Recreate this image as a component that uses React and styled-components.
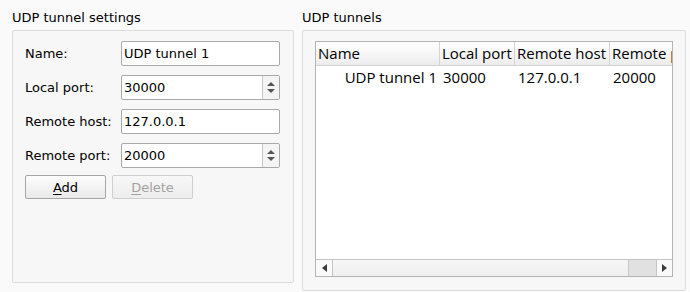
import React from 'react'
import { styled, createGlobalStyle } from 'styled-components'

const GlobalStyle = createGlobalStyle`
    body {
        margin: 0;
        background: #fafafa;
        font-family: "DejaVu Sans", sans-serif;
        font-size: 13px;
        color: #000;
    }
`

const Window = styled.div`
    width: 690px;
    height: 292px;
    box-sizing: border-box;
    display: flex;
    gap: 8px;
    padding-left: 12px;
`

const Column = styled.section`
    display: flex;
    flex-direction: column;
    width: ${props => props.$width}px;
`

const Title = styled.div`
    height: 30px;
    box-sizing: border-box;
    padding-top: 10px;
    line-height: 16px;
    white-space: nowrap;
`

const GroupBox = styled.div`
    height: ${props => props.$height}px;
    box-sizing: border-box;
    border: 1px solid #dcdcdc;
    border-radius: 2px;
    background: #f7f7f7;
    display: flex;
    flex-direction: column;
    padding: ${props => props.$padding};
`

const Form = styled.div`
    display: grid;
    grid-template-columns: 96px 159px;
    grid-auto-rows: 25px;
    row-gap: 9px;
    align-items: center;
`

const Label = styled.label`
    white-space: nowrap;
`

const Field = styled.div`
    height: 25px;
    box-sizing: border-box;
    border: 1px solid #a9a9a9;
    border-radius: 2px;
    background: #fff;
    display: flex;
    align-items: center;
    overflow: hidden;
`

const FieldText = styled.span`
    flex: 1;
    padding-left: 2px;
    white-space: nowrap;
`

const Spin = styled.div`
    width: 16px;
    align-self: stretch;
    border-left: 1px solid #c8c8c8;
    background: #f4f4f4;
    display: flex;
    flex-direction: column;
    align-items: center;
    justify-content: center;
    gap: 3px;
`

const Arrow = styled.span`
    width: 0;
    height: 0;
    border-left: ${props => props.$size}px solid transparent;
    border-right: ${props => props.$size}px solid transparent;
    ${props => props.$up
        ? `border-bottom: ${props.$size}px solid #555;`
        : `border-top: ${props.$size}px solid #555;`}
`

const ButtonRow = styled.div`
    display: flex;
    gap: 6px;
    margin-top: 7px;
`

const Button = styled.button`
    width: 81px;
    height: 24px;
    padding: 0;
    font: inherit;
    border: 1px solid ${props => props.disabled ? '#cfcfcf' : '#a6a6a6'};
    border-radius: 2px;
    color: ${props => props.disabled ? '#a2a2a2' : '#000'};
    background: ${props => props.disabled
        ? 'linear-gradient(#f8f8f8, #ededed)'
        : 'linear-gradient(#fdfdfd, #e9e9e9)'};
    u {
        text-underline-offset: 2px;
    }
`

const Table = styled.div`
    flex: 1;
    border: 1px solid #b4b4b4;
    background: #fff;
    display: flex;
    flex-direction: column;
    overflow: hidden;
    font-family: "Open Sans", sans-serif;
    font-size: 15px;
`

const HeaderRow = styled.div`
    display: flex;
    height: 24px;
    box-sizing: border-box;
    border-bottom: 1px solid #d2d2d2;
    background: linear-gradient(#ffffff, #f6f6f6 50%, #ececec);
`

const HeaderCell = styled.div`
    flex: none;
    width: ${props => props.$width}px;
    box-sizing: border-box;
    border-right: 1px solid #d4d4d4;
    padding-left: 2px;
    line-height: 23px;
    white-space: nowrap;
    overflow: hidden;
`

const Row = styled.div`
    display: flex;
    height: 21px;
    align-items: center;
`

const Cell = styled.div`
    flex: none;
    width: ${props => props.$width}px;
    box-sizing: border-box;
    padding: 0 3px;
    text-align: ${props => props.$align || 'left'};
    white-space: nowrap;
    overflow: hidden;
`

const Body = styled.div`
    flex: 1;
`

const ScrollBar = styled.div`
    height: 17px;
    box-sizing: border-box;
    border-top: 1px solid #c4c4c4;
    display: flex;
    background: linear-gradient(#f7f7f7, #efefef);
`

const ScrollButton = styled.div`
    width: 17px;
    box-sizing: border-box;
    display: flex;
    align-items: center;
    justify-content: center;
    background: #fafafa;
    ${props => props.$side === 'left'
        ? 'border-right: 1px solid #c4c4c4;'
        : 'border-left: 1px solid #c4c4c4; width: 16px;'}
`

const Track = styled.div`
    flex: 1;
    display: flex;
    justify-content: flex-end;
`

const Thumb = styled.div`
    width: 28px;
    box-sizing: border-box;
    border-left: 1px solid #c8c8c8;
    background: #e1e1e1;
`

const SideArrow = styled.span`
    width: 0;
    height: 0;
    border-top: 4px solid transparent;
    border-bottom: 4px solid transparent;
    ${props => props.$dir === 'left'
        ? 'border-right: 5px solid #3c3c3c;'
        : 'border-left: 5px solid #3c3c3c;'}
`

const fields = [
    { label: 'Name:', value: 'UDP tunnel 1' },
    { label: 'Local port:', value: '30000', spin: true },
    { label: 'Remote host:', value: '127.0.0.1' },
    { label: 'Remote port:', value: '20000', spin: true },
]

const columns = [
    { title: 'Name', width: 124 },
    { title: 'Local port', width: 75 },
    { title: 'Remote host', width: 95 },
    { title: 'Remote port', width: 100 },
]

const tunnels = [
    { name: 'UDP tunnel 1', local: '30000', host: '127.0.0.1', remote: '20000' },
]

const App = () => {
  return (
    <>
      <GlobalStyle />
      <Window>
        <Column $width={282}>
          <Title>UDP tunnel settings</Title>
          <GroupBox $height={253} $padding="10px 0 0 12px">
            <Form>
              {fields.map(f => (
                <React.Fragment key={f.label}>
                  <Label>{f.label}</Label>
                  <Field>
                    <FieldText>{f.value}</FieldText>
                    {f.spin && (
                      <Spin>
                        <Arrow $up $size={4} />
                        <Arrow $size={4} />
                      </Spin>
                    )}
                  </Field>
                </React.Fragment>
              ))}
            </Form>
            <ButtonRow>
              <Button><u>A</u>dd</Button>
              <Button disabled><u>D</u>elete</Button>
            </ButtonRow>
          </GroupBox>
        </Column>
        <Column $width={384}>
          <Title>UDP tunnels</Title>
          <GroupBox $height={261} $padding="10px 12px 13px 12px">
            <Table>
              <HeaderRow>
                {columns.map(c => (
                  <HeaderCell key={c.title} $width={c.width}>{c.title}</HeaderCell>
                ))}
              </HeaderRow>
              <Body>
                {tunnels.map(t => (
                  <Row key={t.name}>
                    <Cell $width={124} $align="right">{t.name}</Cell>
                    <Cell $width={75}>{t.local}</Cell>
                    <Cell $width={95}>{t.host}</Cell>
                    <Cell $width={100}>{t.remote}</Cell>
                  </Row>
                ))}
              </Body>
              <ScrollBar>
                <ScrollButton $side="left"><SideArrow $dir="left" /></ScrollButton>
                <Track><Thumb /></Track>
                <ScrollButton $side="right"><SideArrow $dir="right" /></ScrollButton>
              </ScrollBar>
            </Table>
          </GroupBox>
        </Column>
      </Window>
    </>
  )
}

export default App
